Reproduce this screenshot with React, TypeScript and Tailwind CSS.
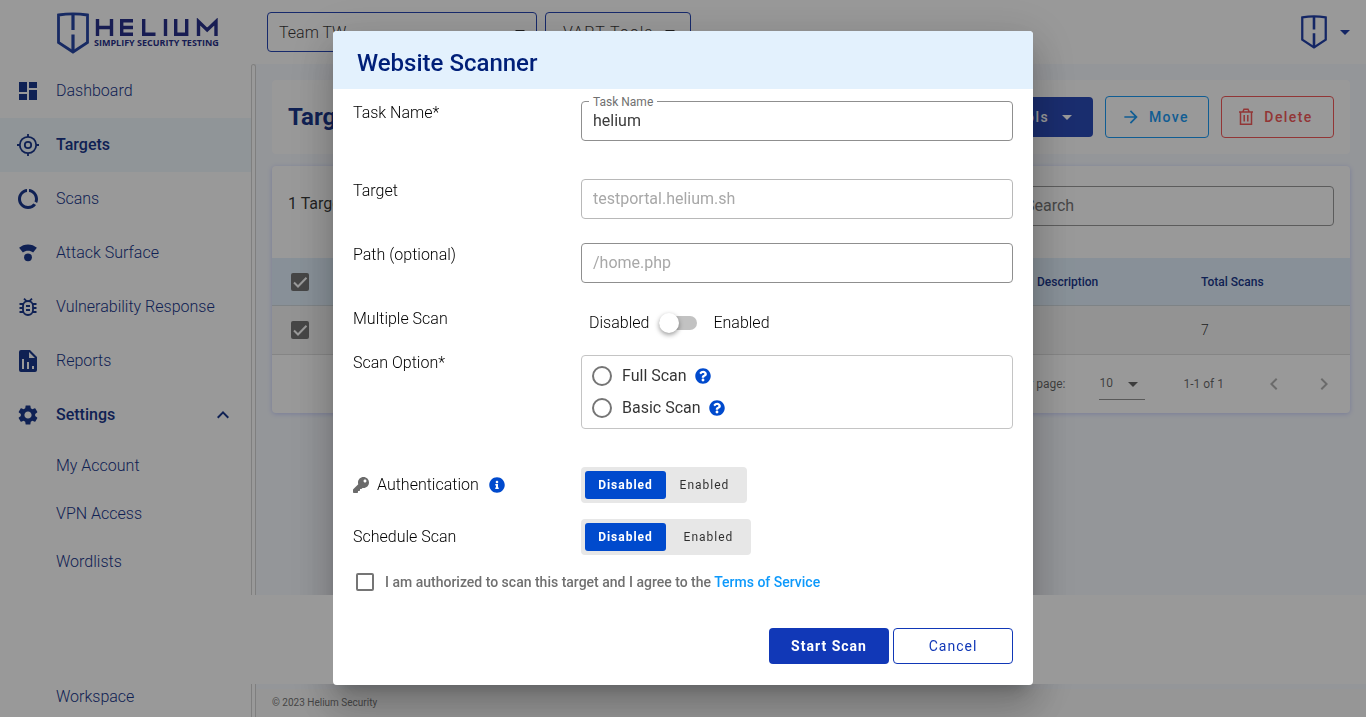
import { useState } from 'react';
import type { ReactNode } from 'react';
import { FaInfoCircle, FaKey, FaQuestionCircle } from 'react-icons/fa';
import {
  MdArrowDropDown,
  MdArrowForward,
  MdChevronLeft,
  MdChevronRight,
  MdDashboard,
  MdDataUsage,
  MdKeyboardArrowUp,
  MdSettings,
} from 'react-icons/md';

function Shield({ className }: { className: string }) {
  return (
    <svg viewBox="0 0 32 42" className={className} fill="none" stroke="currentColor" strokeWidth="2.8" aria-hidden="true">
      <path d="M1.5 3 Q16 .6 30.5 3 V30.5 L16 40 L1.5 30.5 Z" />
      <path d="M16 2 V18 M16 22.500 V40" strokeWidth="3.2" />
    </svg>
  );
}

function TargetIcon() {
  return (
    <svg viewBox="0 0 24 24" className="size-6" fill="none" stroke="currentColor" strokeWidth="1.8" aria-hidden="true">
      <circle cx="12" cy="12" r="8.2" />
      <circle cx="12" cy="12" r="3.2" />
      <path d="M12 1v3M12 20v3M1 12h3M20 12h3" />
    </svg>
  );
}

function SurfaceIcon() {
  return (
    <svg viewBox="0 0 24 24" className="size-6" fill="currentColor" aria-hidden="true">
      <path d="M12 3.500c-3.300 0-6.400 1.200-8.900 3.300l3.800 4.700c1.400-1.100 3.200-1.700 5.100-1.700s3.700.6 5.100 1.700l3.800-4.700C18.400 4.700 15.300 3.500 12 3.500z" />
      <circle cx="12" cy="16.300" r="3.900" />
    </svg>
  );
}

function BugIcon() {
  return (
    <svg viewBox="0 0 24 24" className="size-6" fill="none" stroke="currentColor" strokeWidth="1.8" aria-hidden="true">
      <rect x="7" y="6" width="10" height="14" rx="5" />
      <path d="M3.500 9H7M3.500 13H7M3.500 17H7M17 9h3.500M17 13h3.500M17 17h3.500M10 11h4M10 15h4M8 3.700l2.500 2.500M16 3.700l-2.500 2.500" />
    </svg>
  );
}

function ReportIcon() {
  return (
    <svg viewBox="0 0 24 24" className="size-6" fill="currentColor" aria-hidden="true">
      <path
        fillRule="evenodd"
        d="M5 1h9l7 7v13a2 2 0 0 1-2 2H5a2 2 0 0 1-2-2V3a2 2 0 0 1 2-2zm8 2v6h6zM6 10v10h2V10zm5 3v7h2v-7zm5 4v3h2v-3z"
      />
    </svg>
  );
}

function TrashIcon() {
  return (
    <svg viewBox="0 0 16 18" className="h-[18px] w-4" fill="none" stroke="currentColor" strokeWidth="1.500" aria-hidden="true">
      <path d="M1 4h14M2.500 4.500V16.200h11V4.500M5 3.500 6 1.200h4l1 2.300M6.200 7v6.500M9.800 7v6.500" />
    </svg>
  );
}

function NavItem({ icon, label, active, bold, children }: { icon: ReactNode; label: string; active?: boolean; bold?: boolean; children?: ReactNode }) {
  return (
    <a
      href="#"
      className={`flex h-[54px] items-center gap-4 pr-4 pl-4 ${active ? 'bg-[#f1f9fe]' : ''} ${bold ? 'font-medium' : 'font-light'}`}
    >
      {icon}
      <span className="flex-1">{label}</span>
      {children}
    </a>
  );
}

function Row({ label, htmlFor, className, children }: { label: ReactNode; htmlFor?: string; className: string; children: ReactNode }) {
  return (
    <div className={`flex items-start ${className}`}>
      <label htmlFor={htmlFor} className="w-[228px] shrink-0 leading-6">
        {label}
      </label>
      <div className="min-w-0 flex-1">{children}</div>
    </div>
  );
}

function Segmented({ name, wide }: { name: string; wide?: boolean }) {
  const [on, setOn] = useState(false);
  const active = 'bg-[#004acd] font-bold text-white';
  const idle = 'font-normal text-black/80';
  return (
    <div role="group" aria-label={name} className="inline-flex h-9 items-center rounded bg-[#e7e7e7] p-1 text-xs tracking-[1px]">
      <button type="button" onClick={() => setOn(false)} className={`h-7 w-[81px] rounded-[3px] ${on ? idle : active}`}>
        Disabled
      </button>
      <button type="button" onClick={() => setOn(true)} className={`h-7 rounded-[3px] ${wide ? 'w-[81px] pl-1' : 'w-[77px]'} ${on ? active : idle}`}>
        Enabled
      </button>
    </div>
  );
}

function RowCheckbox({ label }: { label: string }) {
  return (
    <span className="relative block size-[18px]">
      <input type="checkbox" defaultChecked aria-label={label} className="block size-[18px] appearance-none rounded-[2px] bg-[#757575]" />
      <svg viewBox="0 0 18 18" className="pointer-events-none absolute inset-0 size-[18px]" fill="none" stroke="white" strokeWidth="2" aria-hidden="true">
        <path d="M3 9.500 7 13.500 15.500 4.800" />
      </svg>
    </span>
  );
}

function Sidebar() {
  return (
    <nav className="flex w-[251px] shrink-0 flex-col bg-white text-base text-[#1a378c]">
      <NavItem icon={<MdDashboard className="size-6" />} label="Dashboard" />
      <NavItem icon={<TargetIcon />} label="Targets" active bold />
      <NavItem icon={<MdDataUsage className="size-6" />} label="Scans" />
      <NavItem icon={<SurfaceIcon />} label="Attack Surface" />
      <NavItem icon={<BugIcon />} label="Vulnerability Response" />
      <NavItem icon={<ReportIcon />} label="Reports" />
      <NavItem icon={<MdSettings className="size-6" />} label="Settings" bold>
        <MdKeyboardArrowUp className="size-6" />
      </NavItem>
      {['My Account', 'VPN Access', 'Wordlists'].map((item) => (
        <a key={item} href="#" className="flex h-12 items-center pl-14 font-light">
          {item}
        </a>
      ))}
      <a href="#" className="mt-auto flex h-10 items-center pl-14 font-light">
        Workspace
      </a>
    </nav>
  );
}

function TargetsPage() {
  return (
    <div className="flex min-w-0 flex-1 flex-col bg-[#f7faff]">
      <main className="flex-1 px-4 pt-4">
        <section className="flex h-[74px] items-center gap-3 rounded bg-white px-4">
          <h1 className="flex-1 text-2xl font-bold text-[#1a378c]">Targets</h1>
          <button type="button" className="flex h-10 items-center gap-[6px] rounded bg-[#2b4bb8] pr-[14px] pl-4 text-sm font-medium tracking-widest text-white">
            VAPT Tools
            <MdArrowDropDown className="size-6" />
          </button>
          <button type="button" className="flex h-[42px] w-[104px] items-center justify-center gap-2 rounded border border-[#1c9bf5] pr-1 text-sm font-medium tracking-widest text-[#1c9bf5]">
            <MdArrowForward className="size-5" />
            Move
          </button>
          <button type="button" className="flex h-[42px] w-[113px] items-center justify-center gap-[10px] rounded border border-[#f35b5b] pr-1 text-sm font-medium tracking-widest text-[#f35b5b]">
            <TrashIcon />
            Delete
          </button>
        </section>

        <section className="mt-3 overflow-hidden rounded bg-white shadow-[0_1px_5px_#c9d0ff]">
          <div className="flex h-[92px] items-start justify-between px-4 pt-5">
            <h2 className="leading-9">1 Target</h2>
            <input aria-label="Search" placeholder="Search" className="h-10 w-[322px] rounded border border-[#9a9a9a] px-3 pb-px outline-none placeholder:text-[#777]" />
          </div>
          <table className="w-full table-fixed border-collapse text-left">
            <thead>
              <tr className="h-[47px] border-b border-[#d3dbe0] bg-[#e3f1fd] text-xs text-[#1a378c]">
                <th className="w-[76px] pt-px pl-[19px]">
                  <RowCheckbox label="Select all targets" />
                </th>
                <th className="font-medium" />
                <th className="w-[164px] pt-px font-medium">Description</th>
                <th className="w-[149px] pt-px font-medium">Total Scans</th>
              </tr>
            </thead>
            <tbody>
              <tr className="h-[49px] border-b border-[#dedede] bg-[#f5f5f5] text-sm font-light">
                <td className="pl-[19px]">
                  <RowCheckbox label="Select target" />
                </td>
                <td />
                <td />
                <td>7</td>
              </tr>
            </tbody>
          </table>
          <div className="flex h-[58px] items-center justify-end pr-[14px] text-xs text-black/60">
            <label htmlFor="page-size">Items per page:</label>
            <span className="relative ml-[34px] flex items-center">
              <select id="page-size" className="h-8 w-[46px] appearance-none border-b border-[#949494] outline-none">
                <option>10</option>
              </select>
              <MdArrowDropDown className="pointer-events-none absolute right-0 size-6" />
            </span>
            <span className="ml-[38px]">1-1 of 1</span>
            <button type="button" aria-label="Previous page" className="ml-[38px] text-black/30">
              <MdChevronLeft className="size-6" />
            </button>
            <button type="button" aria-label="Next page" className="ml-[26px] text-black/30">
              <MdChevronRight className="size-6" />
            </button>
          </div>
        </section>
      </main>
      <footer className="flex h-7 items-center bg-[#fafafa] px-4 pb-px text-[10px] text-[#757575]">© 2023 Helium Security</footer>
    </div>
  );
}

function ScannerDialog() {
  const field = 'h-10 w-full rounded border bg-transparent px-[11px] pb-px text-base outline-none';
  return (
    <div role="dialog" aria-modal="true" aria-labelledby="dialog-title" className="relative isolate w-[700px] rounded shadow-[0_11px_15px_-7px_rgba(0,0,0,0.2),0_24px_38px_3px_rgba(0,0,0,0.14),0_9px_46px_8px_rgba(0,0,0,0.12)]">
      <div className="absolute -inset-x-[100vw] bottom-px -z-10 h-[89px] bg-[#999999]" />
      <div className="overflow-hidden rounded bg-white">
        <h2 id="dialog-title" className="flex h-[58px] items-center bg-[#e3f1fd] px-6 pt-[6px] text-2xl font-medium text-[#001f78]">
          Website Scanner
        </h2>
        <form className="px-5 pt-3 pb-[21px] text-base font-light text-black" onSubmit={(e) => e.preventDefault()}>
          <Row label="Task Name*" htmlFor="task-name" className="h-[78px]">
            <div className="relative">
              <input id="task-name" defaultValue="helium" className={`${field} border-[#8f8f8f] font-normal text-[#3c3c3c]`} />
              <span className="absolute -top-[7px] left-2 bg-white px-1 text-xs leading-4 font-normal text-[#707070]">Task Name</span>
            </div>
          </Row>
          <Row label="Target" htmlFor="target" className="h-16">
            <input id="target" disabled placeholder="testportal.helium.sh" className={`${field} border-[#b8b8b8] placeholder:font-normal placeholder:text-[#a8a8a8]`} />
          </Row>
          <Row label="Path (optional)" htmlFor="path" className="h-16">
            <input id="path" placeholder="/home.php" className={`${field} border-[#8f8f8f] placeholder:font-normal placeholder:text-[#a8a8a8]`} />
          </Row>
          <Row label="Multiple Scan" htmlFor="multiple" className="h-11">
            <div className="flex items-center gap-[10px] pt-1 pl-2 leading-6">
              Disabled
              <span className="relative flex h-5 w-[38px] items-center">
                <input id="multiple" type="checkbox" role="switch" className="peer h-[14px] w-full appearance-none rounded-full bg-[#c2c2c2]" />
                <span className="pointer-events-none absolute left-0 size-5 rounded-full bg-white shadow-[0_2px_5px_rgba(0,0,0,0.4)] peer-checked:left-[18px]" />
              </span>
              <span className="pl-[6px]">Enabled</span>
            </div>
          </Row>
          <Row label="Scan Option*" className="h-[116px]">
            <div role="radiogroup" aria-label="Scan Option" className="mt-1 flex h-[74px] flex-col justify-center rounded border border-[#c4c4c4] px-[10px] font-normal text-black/80">
              {['Full Scan', 'Basic Scan'].map((option) => (
                <div key={option} className="flex h-8 items-center gap-2">
                  <label className="flex items-center gap-[10px]">
                    <input type="radio" name="scan-option" className="size-5 appearance-none rounded-full border-2 border-[#757575] checked:border-[6px] checked:border-[#004acd]" />
                    {option}
                  </label>
                  <FaQuestionCircle className="size-4 text-[#004acd]" />
                </div>
              ))}
            </div>
          </Row>
          <Row
            className="h-[52px]"
            label={
              <span className="flex items-center pt-[6px]">
                <FaKey className="mr-2 size-4 text-[#6b6b6b]" />
                Authentication
                <FaInfoCircle className="ml-[10px] size-4 text-[#004acd]" />
              </span>
            }
          >
            <Segmented name="Authentication" />
          </Row>
          <Row label={<span className="block pt-[6px]">Schedule Scan</span>} className="h-[53px]">
            <Segmented name="Schedule Scan" wide />
          </Row>
          <div className="flex items-center gap-[11px] pl-[3px] text-sm font-medium text-[#707070]">
            <input id="agree" type="checkbox" className="size-[18px] appearance-none rounded-[2px] border-2 border-[#757575] checked:bg-[#004acd]" />
            <span>
              <label htmlFor="agree">I am authorized to scan this target and I agree to the </label>
              <a href="#" className="text-[#0d99fb]">
                Terms of Service
              </a>
            </span>
          </div>
          <div className="mt-9 flex justify-end gap-1 text-sm tracking-[1px]">
            <button type="submit" className="h-9 w-[120px] rounded bg-[#1138b7] font-bold text-white">
              Start Scan
            </button>
            <button type="button" className="h-9 w-[120px] rounded border border-[#1138b7] font-normal text-[#1138b7]">
              Cancel
            </button>
          </div>
        </form>
      </div>
    </div>
  );
}

export default function App() {
  return (
    <div className="flex h-screen flex-col overflow-hidden bg-white font-['Roboto',sans-serif] text-black/80">
      <header className="flex h-16 shrink-0 items-center pr-[9px] pl-14">
        <a href="#" className="flex w-[211px] items-center gap-[5px] pt-[2px] pl-px text-[#28318a]">
          <Shield className="h-[42px] w-8 text-[#2746a5]" />
          <span className="flex flex-col font-['Open_Sans',sans-serif]">
            <svg viewBox="0 0 125 19" className="h-[19px] w-[125px]" fill="none" stroke="currentColor" strokeWidth="3.4" role="img" aria-label="Helium">
              <path d="M3.500 1v17M3.500 9.500h14M17.500 1v17M39 2.700H27.700v13.600H39M27.700 9.500H39M49.700 1v15.300H61.500M71.500 1v17M81.700 1v15.300h11V1M104.500 18V3.500l8.700 8.500 8.800-8.500V18" />
            </svg>
            <span className="text-[9px] leading-3 font-bold whitespace-nowrap">SIMPLIFY SECURITY TESTING</span>
          </span>
        </a>
        <button type="button" className="flex h-10 w-[270px] items-center justify-between rounded border border-[#2746b4] pr-1 pl-[11px] font-light">
          <span className="pt-[2px]">Team TW</span>
          <MdArrowDropDown className="size-6" />
        </button>
        <button type="button" className="ml-2 flex h-10 w-[146px] items-center justify-between rounded border border-[#2746b4] pr-2 pl-[17px] font-light tracking-[1px]">
          <span className="pt-[2px]">VAPT Tools</span>
          <MdArrowDropDown className="size-6" />
        </button>
        <button type="button" aria-label="Account" className="ml-auto flex items-center gap-[6px] text-[#2240a8]">
          <Shield className="h-[34px] w-[26px]" />
          <MdArrowDropDown className="size-6" />
        </button>
      </header>
      <div className="flex min-h-0 flex-1">
        <Sidebar />
        <div className="w-[5px] shrink-0 rounded-t-sm border border-b-0 border-[#d4d4d4]" />
        <TargetsPage />
      </div>
      <div className="fixed inset-0 flex items-center justify-center overflow-hidden bg-black/40 pb-px">
        <ScannerDialog />
      </div>
    </div>
  );
}
